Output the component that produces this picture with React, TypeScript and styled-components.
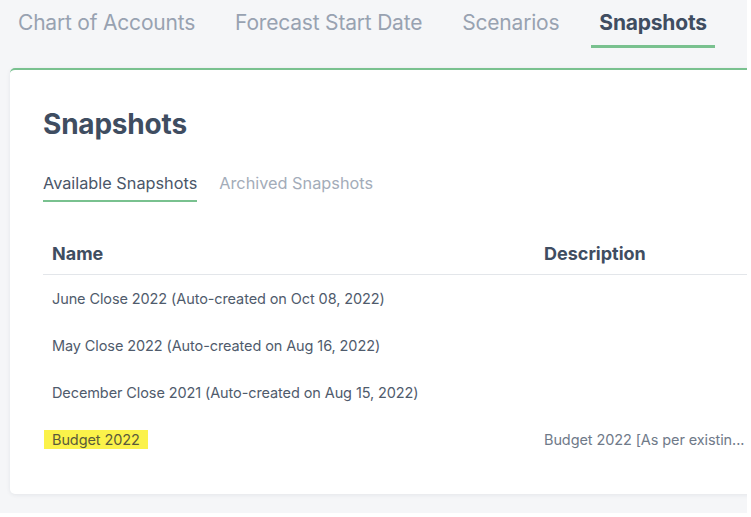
import React from "react";
import styled, { createGlobalStyle } from "styled-components";

const GlobalStyle = createGlobalStyle`
  html, body {
    margin: 0;
    padding: 0;
    background: #ffffff;
  }
  body {
    font-family: Inter, "Noto Sans", sans-serif;
    -webkit-font-smoothing: antialiased;
  }
`;

const Page = styled.div`
  width: 747px;
  height: 513px;
  background-color: #f5f6f8;
  overflow: hidden;
  box-sizing: border-box;
  padding-left: 10px;
`;

const TopNav = styled.nav`
  display: flex;
  align-items: flex-start;
  gap: 40px;
  padding: 10px 0 0 8px;
  height: 68px;
  box-sizing: border-box;
`;

const TopTab = styled.div<{ $active?: boolean }>`
  font-size: 21px;
  line-height: 26px;
  font-weight: ${(p) => (p.$active ? 700 : 400)};
  color: ${(p) => (p.$active ? "#3f4d61" : "#98a2b1")};
  letter-spacing: -0.2px;
  padding: 0 ${(p) => (p.$active ? "8px" : "0")};
  margin: 0 ${(p) => (p.$active ? "-8px" : "0")};
  height: 38px;
  box-sizing: border-box;
  border-bottom: 3px solid ${(p) => (p.$active ? "#79c18f" : "transparent")};
`;

const Card = styled.section`
  width: 760px;
  height: 426px;
  background: #ffffff;
  border-top: 2px solid #79c18f;
  border-radius: 5px;
  box-shadow: 0 1px 4px rgba(30, 40, 60, 0.08);
  box-sizing: border-box;
  padding: 36px 0 0 33px;
`;

const Heading = styled.h1`
  margin: 0;
  font-size: 28px;
  line-height: 36px;
  font-weight: 700;
  color: #3f4d61;
  letter-spacing: -0.2px;
`;

const SubTabs = styled.div`
  display: flex;
  gap: 22px;
  margin-top: 30px;
`;

const SubTab = styled.div<{ $active?: boolean }>`
  font-size: 16.3px;
  line-height: 22px;
  color: ${(p) => (p.$active ? "#4a5668" : "#a3acb9")};
  padding-bottom: 6px;
  border-bottom: 2px solid ${(p) => (p.$active ? "#79c18f" : "transparent")};
`;

const Table = styled.table`
  border-collapse: collapse;
  width: 714px;
  margin-top: 32px;
  table-layout: fixed;
`;

const HeadCell = styled.th<{ $w?: number }>`
  text-align: left;
  font-size: 18px;
  font-weight: 700;
  color: #3f4d61;
  padding: 9px 9px 9px;
  line-height: 22px;
  border-bottom: 1px solid #e3e6ea;
  width: ${(p) => (p.$w ? `${p.$w}px` : "auto")};
`;

const Cell = styled.td`
  font-size: 14.5px;
  color: #4f5b6c;
  height: 47px;
  padding: 0 9px;
  vertical-align: middle;
  white-space: nowrap;
  letter-spacing: -0.1px;
`;

const DescCell = styled(Cell)`
  color: #6f7a89;
`;

const Highlight = styled.span`
  background: #fbf24a;
  color: #5a5a3a;
  padding: 1px 8px;
  margin-left: -8px;
`;

const rows = [
  { name: "June Close 2022 (Auto-created on Oct 08, 2022)", desc: "" },
  { name: "May Close 2022 (Auto-created on Aug 16, 2022)", desc: "" },
  { name: "December Close 2021 (Auto-created on Aug 15, 2022)", desc: "" },
  { name: "Budget 2022", desc: "Budget 2022 [As per existin...", mark: true },
];

export default function App() {
  return (
    <>
      <GlobalStyle />
      <Page>
        <TopNav>
          <TopTab>Chart of Accounts</TopTab>
          <TopTab>Forecast Start Date</TopTab>
          <TopTab>Scenarios</TopTab>
          <TopTab $active>Snapshots</TopTab>
        </TopNav>
        <Card>
          <Heading>Snapshots</Heading>
          <SubTabs>
            <SubTab $active>Available Snapshots</SubTab>
            <SubTab>Archived Snapshots</SubTab>
          </SubTabs>
          <Table>
            <thead>
              <tr>
                <HeadCell $w={474}>Name</HeadCell>
                <HeadCell>Description</HeadCell>
              </tr>
            </thead>
            <tbody>
              {rows.map((r) => (
                <tr key={r.name}>
                  <Cell>{r.mark ? <Highlight>{r.name}</Highlight> : r.name}</Cell>
                  <DescCell>{r.desc}</DescCell>
                </tr>
              ))}
            </tbody>
          </Table>
        </Card>
      </Page>
    </>
  );
}
